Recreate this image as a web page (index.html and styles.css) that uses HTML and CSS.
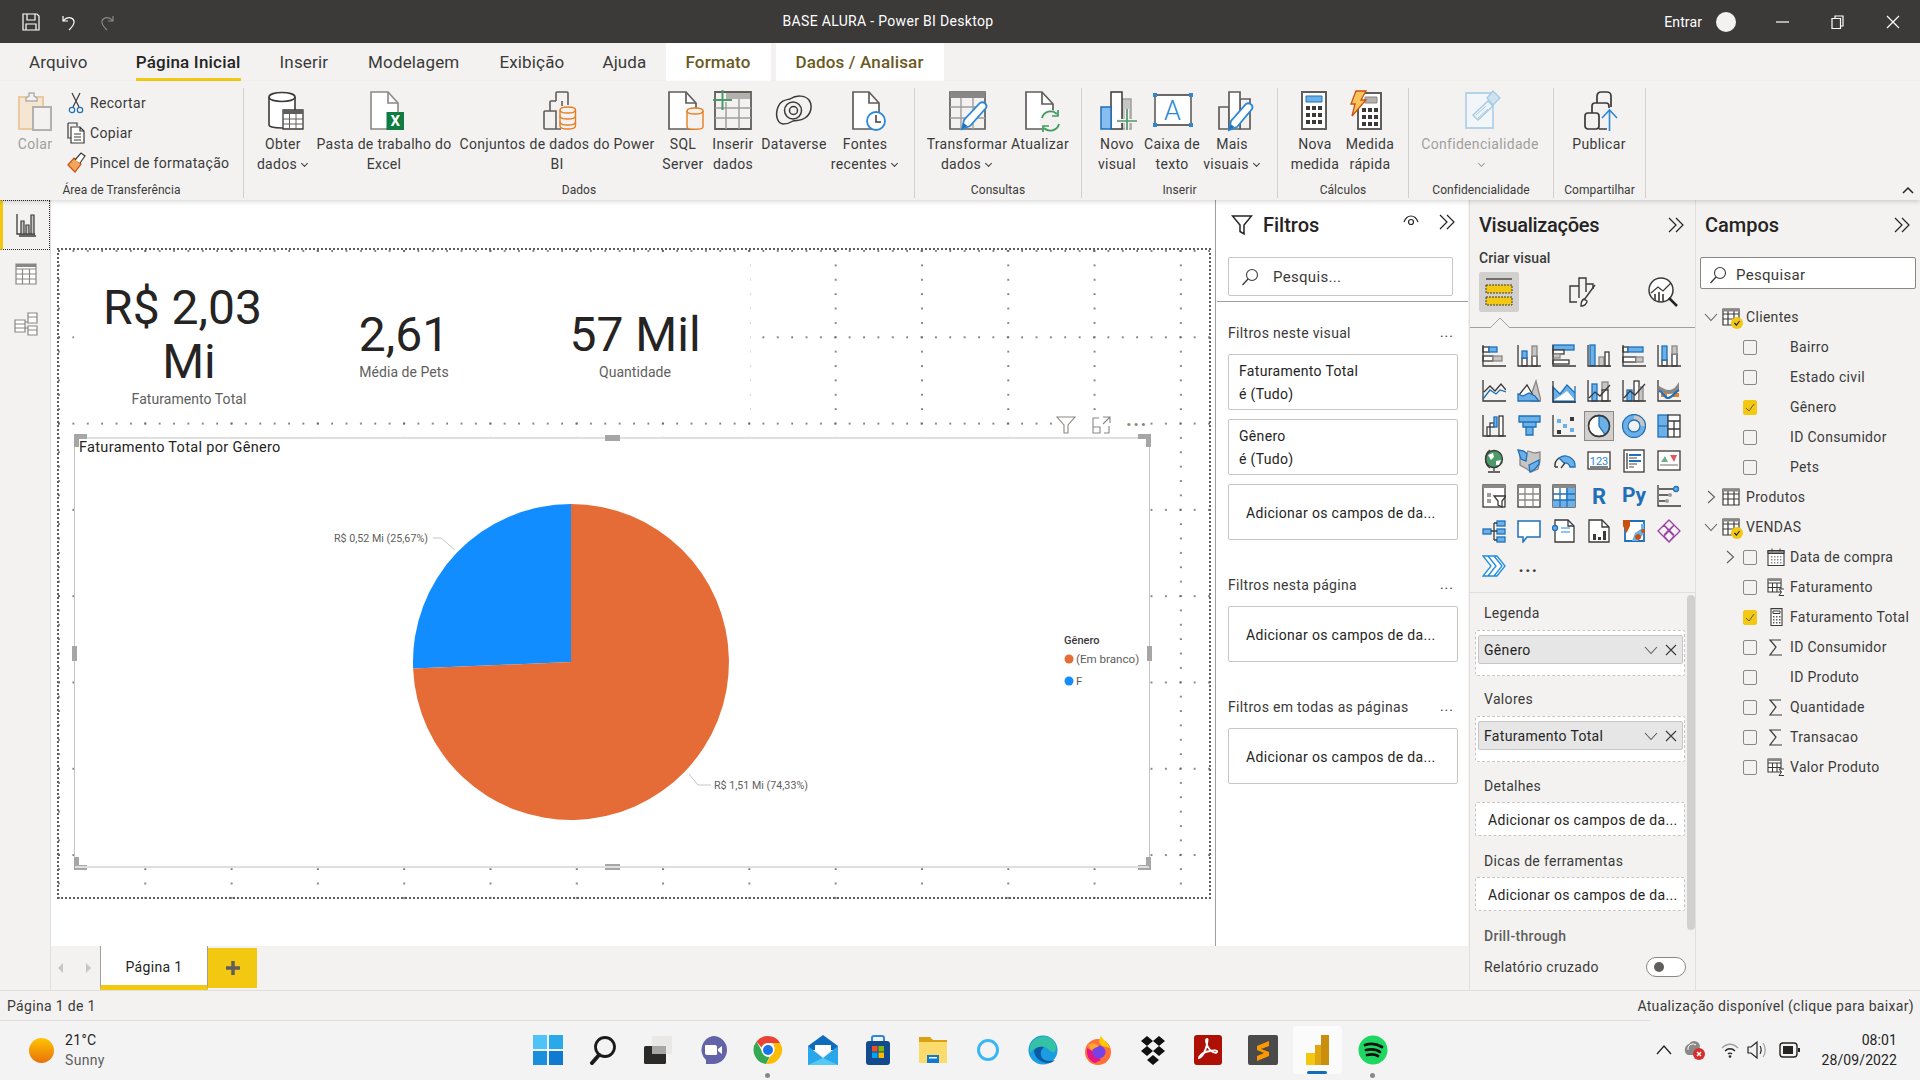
FILE: index.html
```html
<!DOCTYPE html>
<html lang="pt-BR">
<head>
<meta charset="utf-8">
<title>BASE ALURA - Power BI Desktop</title>
<link rel="stylesheet" href="styles.css">
</head>
<body>
<svg class="sprite" aria-hidden="true">
  <symbol id="tbl" viewBox="0 0 18 18"><path d="M1 1h16v16H1zM1 6h16M1 11h16M6 2v15M12 2v15" fill="#fff" stroke="#3b3a39" stroke-width="1.2"/><path d="M1 1h16v2.5H1z" fill="#8a8886"/></symbol>
  <symbol id="chk" viewBox="0 0 12 12"><circle cx="6" cy="6" r="6" fill="#f2c811"/><path d="M3.4 6l2 2 3.2-4" fill="none" stroke="#252423" stroke-width="1.2"/></symbol>
  <symbol id="sig" viewBox="0 0 18 18"><path d="M14 2H3l6 7-6 8h12" fill="none" stroke="#3b3a39" stroke-width="1.2"/></symbol>
  <symbol id="tsig" viewBox="0 0 18 18"><path d="M1 1h13v13H1zM1 5h13M1 9.500h13M5.500 5v9M10 5v9" fill="#fff" stroke="#3b3a39" stroke-width="1.100"/><path d="M1 1h13v2H1z" fill="#8a8886"/><path d="M17 11h-5l2.600 3-2.600 3.500h5" fill="#fff" stroke="#3b3a39"/></symbol>
  <symbol id="calc" viewBox="0 0 18 18"><path d="M4 .6h11v17H4z" fill="#fff" stroke="#3b3a39" stroke-width="1.100"/><path d="M6 3h7v2.500H6z" fill="none" stroke="#3b3a39"/><path d="M6 8h1.500v1.500H6zM9 8h1.500v1.500H9zM12 8h1.500v1.500H12zM6 11h1.500v1.500H6zM9 11h1.500v1.500H9zM12 11h1.500v1.500H12zM6 14h1.500v1.500H6zM9 14h1.500v1.500H9zM12 14h1.500v1.500H12z" fill="#605e5c"/></symbol>
  <symbol id="cal" viewBox="0 0 18 18"><path d="M1 2.500h16v15H1z" fill="#fff" stroke="#3b3a39" stroke-width="1.100"/><path d="M1 2.500h16v3H1zM5 .5v3M13 .5v3" fill="#8a8886" stroke="#3b3a39"/><path d="M4 8h1.400v1.400H4zM7 8h1.400v1.400H7zM10 8h1.400v1.400H10zM13 8h1.400v1.400H13zM4 11h1.400v1.400H4zM7 11h1.400v1.400H7zM10 11h1.400v1.400H10zM13 11h1.400v1.400H13zM4 14h1.400v1.400H4zM7 14h1.400v1.400H7zM10 14h1.400v1.400H10zM13 14h1.400v1.400H13z" fill="#8a8886"/></symbol>
  <symbol id="dbl" viewBox="0 0 18 18"><path d="M2 2l7 7-7 7M9 2l7 7-7 7" fill="none" stroke="#252423" stroke-width="1.200"/></symbol>
  <symbol id="mag" viewBox="0 0 18 18"><circle cx="11" cy="7" r="5.500" fill="none" stroke="#3b3a39" stroke-width="1.100"/><path d="M7 11l-5.500 6" fill="none" stroke="#3b3a39" stroke-width="1.300"/></symbol>
  <symbol id="cv" viewBox="0 0 14 14"><path d="M1 4l6 6.500L13 4" fill="none" stroke="#605e5c" stroke-width="1.100"/></symbol>
  <symbol id="cr" viewBox="0 0 14 14"><path d="M4 1l6.500 6L4 13" fill="none" stroke="#605e5c" stroke-width="1.100"/></symbol>
  <symbol id="xx" viewBox="0 0 14 14"><path d="M2 2l10 10M12 2L2 12" fill="none" stroke="#3b3a39" stroke-width="1.100"/></symbol>
</svg>
<div class="app">
  <header class="titlebar">
    <div class="qa">
      <svg width="20" height="20" viewBox="0 0 20 20"><path d="M2 2h14l2 2v14H2zM6 2v6h8V2M5 18v-6h10v6" fill="none" stroke="#fff" stroke-width="1.200"/></svg>
      <svg width="20" height="20" viewBox="0 0 20 20"><path d="M4 4v5h5M4.500 8.500C8 4 14 5 15 9c.8 3.500-2 6-5 9" fill="none" stroke="#fff" stroke-width="1.200"/></svg>
      <svg width="20" height="20" viewBox="0 0 20 20"><path d="M16 4v5h-5M15.500 8.500C12 4 6 5 5 9c-.8 3.500 2 6 5 9" fill="none" stroke="#8a8886" stroke-width="1.200"/></svg>
    </div>
    <div class="doc-title">BASE ALURA - Power BI Desktop</div>
    <div class="win">
      <span class="enter">Entrar</span><span class="avatar"></span>
      <svg class="wbtn" width="55" height="14" viewBox="0 0 55 14"><path d="M21 7h13" stroke="#fff" stroke-width="1.200"/></svg>
      <svg class="wbtn" width="55" height="14" viewBox="0 0 55 14"><path d="M22 3.500h8.500v10H22zM25 3.500V1h8v10h-2.500" fill="none" stroke="#fff" stroke-width="1.200"/></svg>
      <svg class="wbtn" width="55" height="14" viewBox="0 0 55 14"><path d="M22 1l12 12M34 1L22 13" fill="none" stroke="#fff" stroke-width="1.200"/></svg>
    </div>
  </header>

  <nav class="tabs">
    <span class="tab tab-first">Arquivo</span>
    <span class="tab tab-on">Página Inicial</span>
    <span class="tab">Inserir</span>
    <span class="tab">Modelagem</span>
    <span class="tab">Exibição</span>
    <span class="tab tab-aj">Ajuda</span>
    <span class="tab tab-ctx">Formato</span>
    <span class="tab tab-ctx tab-ctx2">Dados / Analisar</span>
  </nav>

  <section class="ribbon">
    <div class="group g-clip">
      <div class="group-body">
        <div class="rb w42 off">
          <svg class="ri" viewBox="0 0 40 40"><path d="M4 6h24v32H4z" fill="#f5e6d3" stroke="#e8c9a0" stroke-width="2"/><path d="M11 7l3-2V2h5v3l3 2v3H11z" fill="#f3f2f1" stroke="#b3b0ad" stroke-width="1.500"/><path d="M18 16h18v23H18z" fill="#f3f2f1" stroke="#b3b0ad" stroke-width="2"/></svg>
          <span>Colar</span>
        </div>
        <div class="small-list">
          <div class="sb"><svg width="18" height="22" viewBox="0 0 18 22"><path d="M5 1l7 14M13 1L6 15" fill="none" stroke="#3b3a39" stroke-width="1.200"/><circle cx="5" cy="18" r="2.700" fill="none" stroke="#1f70b8" stroke-width="1.200"/><circle cx="13" cy="18" r="2.700" fill="none" stroke="#1f70b8" stroke-width="1.200"/></svg><span>Recortar</span></div>
          <div class="sb"><svg width="18" height="22" viewBox="0 0 18 22"><path d="M1 1h9v3M1 1v15h3" fill="none" stroke="#3b3a39" stroke-width="1.200"/><path d="M4 5h9l4 4v12H4zM13 5v4h4M7 12h7M7 15h7M7 18h7" fill="#fff" stroke="#3b3a39" stroke-width="1.200"/></svg><span>Copiar</span></div>
          <div class="sb"><svg width="20" height="22" viewBox="0 0 20 22"><path d="M2 13l6-7 7 6-6 8z" fill="#f2a65a" stroke="#ca5010" stroke-width="1.200"/><path d="M9 8l6-7 4 3-5 7" fill="#fff" stroke="#3b3a39" stroke-width="1.200"/></svg><span>Pincel de formatação</span></div>
        </div>
      </div>
      <div class="group-name">Área de Transferência</div>
    </div>

    <div class="group g-data">
      <div class="group-body">
        <div class="rb w58">
          <svg class="ri" viewBox="0 0 40 40"><path d="M6 6c0-6 26-6 26 0v28c0 4-26 4-26 0z" fill="#fff" stroke="#3b3a39" stroke-width="1.600"/><path d="M6 6c0 6 26 6 26 0" fill="none" stroke="#3b3a39" stroke-width="1.600"/><path d="M20 19h20v19H20z" fill="#fff" stroke="#3b3a39" stroke-width="1.300"/><path d="M20 19h20v4H20z" fill="#605e5c"/><path d="M20 28h20M20 33h20M26.500 23v15M33 23v15" stroke="#605e5c"/></svg>
          <span>Obter<br>dados<i class="car"></i></span>
        </div>
        <div class="rb w144">
          <svg class="ri" viewBox="0 0 40 40"><path d="M7 1h17l10 11v26H7z" fill="#fff" stroke="#8a8886" stroke-width="1.600"/><path d="M24 1v11h10" fill="none" stroke="#8a8886" stroke-width="1.600"/><path d="M22.500 21H40v18H22.500z" fill="#107c41"/><text x="31.200" y="35" class="xl">X</text></svg>
          <span>Pasta de trabalho do<br>Excel</span>
        </div>
        <div class="rb w202">
          <svg class="ri" viewBox="0 0 40 40"><path d="M7 21a1 1 0 0 1 1-1h11v18H8a1 1 0 0 1-1-1zM13 20v-9a1 1 0 0 1 1-1h5M19 10V2a1 1 0 0 1 1-1h10a1 1 0 0 1 1 1v12M25 10v5M19 38h5" fill="none" stroke="#605e5c" stroke-width="1.600"/><path d="M23 19c0-4 15.500-4 15.500 0v16c0 4-15.500 4-15.500 0z" fill="#f3f2f1" stroke="#ea7d1f" stroke-width="1.400"/><path d="M23 19c0 4 15.500 4 15.500 0M23 25c0 4 15.500 4 15.500 0M23 31c0 4 15.500 4 15.500 0" fill="none" stroke="#ea7d1f" stroke-width="1.400"/></svg>
          <span>Conjuntos de dados do Power<br>BI</span>
        </div>
        <div class="rb w50">
          <svg class="ri" viewBox="0 0 40 40"><path d="M6 1h17l10 11v26H6z" fill="#fff" stroke="#605e5c" stroke-width="1.700"/><path d="M23 1v11h10" fill="none" stroke="#605e5c" stroke-width="1.700"/><path d="M24 20c0-4 16-4 16 0v16c0 3-16 3-16 0z" fill="#f3f2f1" stroke="#ea7d1f" stroke-width="1.400"/><path d="M24 20c0 4 16 4 16 0" fill="none" stroke="#ea7d1f" stroke-width="1.400"/></svg>
          <span>SQL<br>Server</span>
        </div>
        <div class="rb w50">
          <svg class="ri" viewBox="0 0 40 40"><path d="M2 1h36v37H2z" fill="#f3f2f1" stroke="#605e5c" stroke-width="1.800"/><path d="M2 17h36M2 27h36M13 11v27M26 8v30" stroke="#a19f9d" stroke-width="1.500"/><path d="M13 2h24v6H13z" fill="#b3b0ad"/><path d="M9.500-1v20M0 9h19" stroke="#4c9a6a" stroke-width="2"/></svg>
          <span>Inserir<br>dados</span>
        </div>
        <div class="rb w72">
          <svg class="ri" viewBox="0 0 40 40"><path d="M9 33C3 32 1 24 4 16 7 9 12 9 16 8c6-4 15-4 19 1 4 6 2 14-4 18-4 3-8 2-12 3-3 2-6 3-10 3z" fill="none" stroke="#3b3a39" stroke-width="1.500"/><circle cx="19" cy="19.500" r="8.500" fill="none" stroke="#3b3a39" stroke-width="1.500"/><circle cx="19.500" cy="19.500" r="4" fill="none" stroke="#3b3a39" stroke-width="1.500"/></svg>
          <span>Dataverse</span>
        </div>
        <div class="rb w70">
          <svg class="ri" viewBox="0 0 40 40"><path d="M8 1h16l10 11v26H8z" fill="#fff" stroke="#605e5c" stroke-width="1.700"/><path d="M24 1v11h10" fill="none" stroke="#605e5c" stroke-width="1.700"/><circle cx="31" cy="30" r="9" fill="#fff" stroke="#2b88d8" stroke-width="1.800"/><path d="M31 24v7h5" fill="none" stroke="#3b3a39" stroke-width="1.500"/></svg>
          <span>Fontes<br>recentes<i class="car"></i></span>
        </div>
      </div>
      <div class="group-name">Dados</div>
    </div>

    <div class="group g-query">
      <div class="group-body">
        <div class="rb w84">
          <svg class="ri" viewBox="0 0 40 40"><path d="M3 1h35v37H3z" fill="#f3f2f1" stroke="#605e5c" stroke-width="1.700"/><path d="M3 16h35M3 27h35M14 7v31M26 7v31" stroke="#a19f9d" stroke-width="1.400"/><path d="M3 1h35v6H3z" fill="#8a8886"/><path d="M15 38l2-9 16-17c3-2 8 1 6 5L23 35z" fill="#fff" stroke="#2b88d8" stroke-width="1.800"/><path d="M15 38l1.500-6 4 3z" fill="#1f70b8"/></svg>
          <span>Transformar<br>dados<i class="car"></i></span>
        </div>
        <div class="rb w62">
          <svg class="ri" viewBox="0 0 40 40"><path d="M6 1h16l11 12v25H6z" fill="#fff" stroke="#605e5c" stroke-width="1.700"/><path d="M22 1v12h11" fill="none" stroke="#605e5c" stroke-width="1.700"/><circle cx="30.500" cy="30" r="11" fill="#f3f2f1"/><path d="M22 27a9 9 0 0 1 15-4M39 33a9 9 0 0 1-15 4" fill="none" stroke="#3f9c5f" stroke-width="1.900"/><path d="M38 19v6h-6M23 41v-6h6" fill="none" stroke="#3f9c5f" stroke-width="1.700"/></svg>
          <span>Atualizar</span>
        </div>
      </div>
      <div class="group-name">Consultas</div>
    </div>

    <div class="group g-insert">
      <div class="group-body">
        <div class="rb w50">
          <svg class="ri" viewBox="0 0 40 40"><path d="M25 8h9v30h-9z" fill="#c8c6c4" stroke="#a19f9d" stroke-width="1.500"/><path d="M14 1h11v37H14z" fill="#fff" stroke="#3b3a39" stroke-width="1.500"/><path d="M4 16h10v22H4z" fill="#87bdf0" stroke="#1f70b8" stroke-width="1.500"/><path d="M30 18v21M20 30h20" stroke="#f3f2f1" stroke-width="4"/><path d="M30 18v21M20 30h20" stroke="#4c9a6a" stroke-width="1.700"/></svg>
          <span>Novo<br>visual</span>
        </div>
        <div class="rb w60">
          <svg class="ri" viewBox="0 0 40 40"><path d="M3 4h36v30H3z" fill="#fff" stroke="#3b3a39" stroke-width="1.300"/><path d="M1 2h4v4H1zM37 2h4v4h-4zM1 32h4v4H1zM37 32h4v4h-4z" fill="#2b88d8"/><text x="20.500" y="28.500" class="aa">A</text></svg>
          <span>Caixa de<br>texto</span>
        </div>
        <div class="rb w60">
          <svg class="ri" viewBox="0 0 40 40"><path d="M28 8h10v30H28zM7 16h10v22H7z" fill="#f3f2f1" stroke="#605e5c" stroke-width="1.700"/><path d="M17 1h11v37H17z" fill="#fff" stroke="#605e5c" stroke-width="1.700"/><path d="M17 39l2-9 15-17c3-2 8 1 6 5L25 36z" fill="#fff" stroke="#2b88d8" stroke-width="1.800"/><path d="M17 39l1.500-6 4 3z" fill="#1f70b8"/></svg>
          <span>Mais<br>visuais<i class="car"></i></span>
        </div>
      </div>
      <div class="group-name">Inserir</div>
    </div>

    <div class="group g-calc">
      <div class="group-body">
        <div class="rb w54">
          <svg class="ri" viewBox="0 0 40 40"><path d="M7 1h24v37H7z" fill="#fff" stroke="#605e5c" stroke-width="2"/><path d="M11 5h16v6H11z" fill="#6cb0e8" stroke="#1f70b8"/><path d="M11 15h4v4h-4zM17 15h4v4h-4zM23 15h4v4h-4zM11 22h4v4h-4zM17 22h4v4h-4zM23 22h4v4h-4zM11 29h4v4h-4zM17 29h4v4h-4zM23 29h4v4h-4z" fill="#3b3a39"/></svg>
          <span>Nova<br>medida</span>
        </div>
        <div class="rb w56">
          <svg class="ri" viewBox="0 0 40 40"><path d="M8 2h23v36H8z" fill="#fff" stroke="#605e5c" stroke-width="2"/><path d="M15 6h12v6H15z" fill="#b3b0ad" stroke="#8a8886"/><path d="M12 17h4v4h-4zM18 17h4v4h-4zM24 17h4v4h-4zM12 24h4v4h-4zM18 24h4v4h-4zM24 24h4v4h-4zM12 31h4v4h-4zM18 31h4v4h-4zM24 31h4v4h-4z" fill="#3b3a39"/><path d="M6 0h10l-5 9h5L2 25l3-12H1z" fill="#f8c55c" stroke="#ca5010" stroke-width="1.300"/></svg>
          <span>Medida<br>rápida</span>
        </div>
      </div>
      <div class="group-name">Cálculos</div>
    </div>

    <div class="group g-conf">
      <div class="group-body">
        <div class="rb w122 off">
          <svg class="ri" viewBox="0 0 40 40"><path d="M6 2h27v35H6z" fill="#f3f6f9" stroke="#b4d2e8" stroke-width="1.800"/><path d="M13 24l15-14 5 5-15 14z" fill="#eef4fa" stroke="#a8cbe4" stroke-width="1.500"/><path d="M16 24l10-9M18 27l10-9" stroke="#a8cbe4"/><path d="M27 7l6-7 7 7-7 7z" fill="#cfe2f1" stroke="#a8cbe4" stroke-width="1.300"/></svg>
          <span>Confidencialidade<br><i class="car car-off"></i></span>
        </div>
      </div>
      <div class="group-name">Confidencialidade</div>
    </div>

    <div class="group g-share">
      <div class="group-body">
        <div class="rb w70">
          <svg class="ri" viewBox="0 0 40 40"><path d="M6 25a3 3 0 0 1 3-3h8a3 3 0 0 1 3 3v10a3 3 0 0 1-3 3H9a3 3 0 0 1-3-3zM13 22v-7a3 3 0 0 1 3-3h11a3 3 0 0 1 3 3v2M18 12V5a4 4 0 0 1 4-4h6a4 4 0 0 1 4 4v11M20 38h8" fill="none" stroke="#3b3a39" stroke-width="1.700"/><path d="M30.500 40V19M23 27l7.500-8 7.500 8" fill="none" stroke="#2b88d8" stroke-width="1.600"/></svg>
          <span>Publicar</span>
        </div>
      </div>
      <div class="group-name">Compartilhar</div>
    </div>
    <svg class="collapse" width="12" height="8" viewBox="0 0 12 8"><path d="M1 7l5-5 5 5" fill="none" stroke="#252423" stroke-width="1.500"/></svg>
  </section>

  <main class="main">
    <aside class="rail">
      <div class="rail-item rail-on"><svg width="22" height="24" viewBox="0 0 22 24"><path d="M2 1v20h18M4 23h17" fill="none" stroke="#3b3a39" stroke-width="1.300"/><path d="M6 8h3v13H6zM11 12h3v9h-3zM16 2h3v19h-3z" fill="#c8c6c4" stroke="#3b3a39" stroke-width="1.200"/></svg></div>
      <div class="rail-item"><svg width="22" height="22" viewBox="0 0 22 22"><path d="M1 1h20v20H1zM1 6h20M1 11h20M1 16h20M7.500 6v15M14.500 6v15" fill="#fff" stroke="#8a8886" stroke-width="1.200"/><path d="M1 1h20v3H1z" fill="#8a8886"/></svg></div>
      <div class="rail-item"><svg width="24" height="24" viewBox="0 0 24 24"><path d="M1 8h10v12H1zM1 12h10M1 16h10M14 1h9v10h-9zM14 5h9M14 14h9v9h-9zM14 18h9M11 10h3M11 16h3" fill="#fff" stroke="#8a8886" stroke-width="1.200"/></svg></div>
    </aside>

    <div class="center">
      <div class="workspace">
        <div class="canvas">
          <div class="page">
            <div class="cards">
              <div class="card c1"><div class="big"><span class="shift">R$ 2,03</span><br>Mi</div><div class="cap">Faturamento Total</div></div>
              <div class="card c2"><div class="big">2,61</div><div class="cap">Média de Pets</div></div>
              <div class="card c3"><div class="big">57 Mil</div><div class="cap">Quantidade</div></div>
            </div>
            <div class="vis-tools">
              <svg width="20" height="18" viewBox="0 0 20 18"><path d="M1 1h18l-7 8v8h-4V9z" fill="none" stroke="#8a8886" stroke-width="1.100"/></svg>
              <svg width="20" height="18" viewBox="0 0 20 18"><path d="M8 2H2v15h7v-6H2M18 10v7h-5M12 1h7v6M19 1l-7 7" fill="none" stroke="#8a8886" stroke-width="1.100"/></svg>
              <span class="dots">...</span>
            </div>
            <div class="chart">
              <div class="chart-title">Faturamento Total por Gênero</div>
              <svg class="chart-svg" width="1076" height="431" viewBox="0 0 1076 431">
                <path d="M497 225V67A158 158 0 0 0 339.100 231.600Z" fill="#118dff"/>
                <path d="M497 225L339.100 231.600A158 158 0 1 0 497 67Z" fill="#e66c37"/>
                <path d="M359 101h8l14 12M615 337l9 11h13" fill="none" stroke="#c8c6c4"/>
                <text x="260" y="105" class="lbl">R$ 0,52 Mi (25,67%)</text>
                <text x="640" y="352" class="lbl">R$ 1,51 Mi (74,33%)</text>
                <text x="990" y="207" class="leg-t">Gênero</text>
                <circle cx="995" cy="222" r="4.500" fill="#e66c37"/>
                <text x="1002" y="226" class="leg">(Em branco)</text>
                <circle cx="995" cy="244" r="4.500" fill="#118dff"/>
                <text x="1002" y="248" class="leg">F</text>
              </svg>
              <i class="hd hd-tl"></i><i class="hd hd-tm"></i><i class="hd hd-tr"></i><i class="hd hd-ml"></i><i class="hd hd-mr"></i><i class="hd hd-bl"></i><i class="hd hd-bm"></i><i class="hd hd-br"></i>
            </div>
          </div>
        </div>

        <aside class="filters">
          <div class="pane-head">
            <svg width="22" height="22" viewBox="0 0 22 22"><path d="M1.500 2h19l-7.500 9v9l-4-2.500V11z" fill="none" stroke="#252423" stroke-width="1.500"/></svg>
            <span class="pane-title">Filtros</span>
            <svg class="eye" width="16" height="14" viewBox="0 0 16 14"><path d="M1 8c3-8 11-8 14 0" fill="none" stroke="#252423" stroke-width="1.200"/><circle cx="8" cy="8" r="2.500" fill="none" stroke="#252423" stroke-width="1.200"/></svg>
            <svg class="dblb" width="18" height="18"><use href="#dbl"/></svg>
          </div>
          <div class="fsearch"><svg width="18" height="18"><use href="#mag"/></svg><span>Pesquis...</span></div>
          <div class="fdiv"></div>
          <div class="fsec"><span>Filtros neste visual</span><b>...</b></div>
          <div class="fcard fcard-first">Faturamento Total<br>é (Tudo)</div>
          <div class="fcard">Gênero<br>é (Tudo)</div>
          <div class="fcard fadd">Adicionar os campos de da...</div>
          <div class="fsec fsec-gap"><span>Filtros nesta página</span><b>...</b></div>
          <div class="fcard fcard-first fadd">Adicionar os campos de da...</div>
          <div class="fsec fsec-gap"><span>Filtros em todas as páginas</span><b>...</b></div>
          <div class="fcard fcard-first fadd">Adicionar os campos de da...</div>
        </aside>
      </div>
      <div class="pagebar">
        <svg class="pnav" width="10" height="12" viewBox="0 0 10 12"><path d="M7 1L2 6l5 5z" fill="#c8c6c4"/></svg>
        <svg class="pnav pnav2" width="10" height="12" viewBox="0 0 10 12"><path d="M3 1l5 5-5 5z" fill="#c8c6c4"/></svg>
        <div class="ptab">Página 1</div>
        <div class="padd"><svg width="16" height="16" viewBox="0 0 16 16"><path d="M8 1v14M1 8h14" stroke="#605e5c" stroke-width="3.500"/></svg></div>
      </div>
    </div>

    <aside class="viz">
      <div class="viz-head"><span class="pane-title pt-viz">Visualizações</span><svg width="18" height="18"><use href="#dbl"/></svg></div>
      <div class="criar">Criar visual</div>
      <div class="viz-tabs">
        <div class="vt vt-on"><svg width="34" height="32" viewBox="0 0 34 32"><path d="M4 3h26" stroke="#3b3a39" stroke-width="1.300"/><path d="M4 9h26v8H4zM4 21h26v8H4z" fill="#f2c811" stroke="#3b3a39" stroke-dasharray="2 1"/></svg></div>
        <div class="vt vt-fmt"><svg width="32" height="32" viewBox="0 0 32 32"><path d="M12 22V2h7v14M12 10H3v16h7M19 8h7v5" fill="none" stroke="#3b3a39" stroke-width="1.400"/><path d="M28 9L17 24M14 30c0-4 1-6 3-7l3 2c0 3-3 5-6 5z" fill="#fff" stroke="#3b3a39" stroke-width="1.400"/></svg></div>
        <div class="vt"><svg width="32" height="32" viewBox="0 0 32 32"><circle cx="14" cy="14" r="12" fill="#fff" stroke="#3b3a39" stroke-width="1.500"/><path d="M4 17l7-6 5 4 8-8" fill="none" stroke="#3b3a39" stroke-width="1.300"/><path d="M8 18v6M12 16v9M16 18v7" stroke="#605e5c" stroke-width="2"/><path d="M22 22l8 8" stroke="#252423" stroke-width="2.500"/></svg></div>
      </div>
      <div class="viz-sep"><svg class="notch" width="20" height="11" viewBox="0 0 20 11"><path d="M0 11L10 1l10 10" fill="#f3f2f1" stroke="#a19f9d"/></svg></div>

      <div class="vgrid">
        <svg class="vi" viewBox="0 0 24 24"><rect class="w" x="1" y="3" width="6" height="5"/><rect class="b" x="7" y="3" width="8" height="5"/><rect class="w" x="1" y="12" width="10" height="5"/><rect class="g" x="11" y="12" width="9" height="5"/><path class="d" d="M1 1v21h23"/></svg>
        <svg class="vi" viewBox="0 0 24 24"><rect class="w" x="5" y="14" width="5" height="8"/><rect class="b" x="5" y="7" width="5" height="7"/><rect class="w" x="15" y="12" width="5" height="10"/><rect class="g" x="15" y="2" width="5" height="10"/><path class="d" d="M1 1v21h23"/></svg>
        <svg class="vi" viewBox="0 0 24 24"><rect class="b" x="1" y="1" width="21" height="5"/><rect class="w" x="1" y="6" width="11" height="4"/><rect class="g" x="1" y="10" width="7" height="4"/><rect class="w" x="1" y="16" width="16" height="4"/><path class="d" d="M1 1v21h23"/></svg>
        <svg class="vi" viewBox="0 0 24 24"><rect class="b" x="3" y="1" width="5" height="21"/><rect class="g" x="12" y="13" width="5" height="9"/><rect class="w" x="18" y="8" width="4" height="14"/><path class="d" d="M1 1v21h23"/></svg>
        <svg class="vi" viewBox="0 0 24 24"><rect class="w" x="1" y="3" width="5" height="5"/><rect class="b" x="6" y="3" width="15" height="5"/><rect class="w" x="1" y="13" width="13" height="5"/><rect class="g" x="14" y="13" width="7" height="5"/><path class="d" d="M1 1v21h23"/></svg>
        <svg class="vi" viewBox="0 0 24 24"><rect class="w" x="5" y="16" width="5" height="6"/><rect class="b" x="5" y="2" width="5" height="14"/><rect class="w" x="15" y="10" width="5" height="12"/><rect class="g" x="15" y="2" width="5" height="8"/><path class="d" d="M1 1v21h23"/></svg>

        <svg class="vi" viewBox="0 0 24 24"><path class="d" d="M1 1v21h23M2 13l6-6 5 5 6-7 5 6"/><path class="bl" d="M1 20l7-9 6 4 4-4 6 2"/></svg>
        <svg class="vi" viewBox="0 0 24 24"><path class="g" d="M14 16L19 2l5 20H14z"/><path class="w" d="M2 16l8-10 7 12H2z"/><path class="b" d="M1 22v-7l5 2 6-3 6 3 4 5z"/></svg>
        <svg class="vi" viewBox="0 0 24 24"><path class="b" d="M1 8l7 7 7-9 8 8v-7 16H1z"/><path fill="#fff" stroke="none" d="M2 21l6-4 7-5 7 8v1z"/><path class="d" d="M1 2v21h23"/></svg>
        <svg class="vi" viewBox="0 0 24 24"><rect class="b" x="5" y="5" width="5" height="17"/><rect class="g" x="15" y="3" width="6" height="8"/><rect class="w" x="15" y="11" width="6" height="11"/><path class="d" d="M1 1v21h23M2 19l6-6 5 4 10-11"/></svg>
        <svg class="vi" viewBox="0 0 24 24"><rect class="b" x="5" y="11" width="5" height="11"/><rect class="w" x="12" y="2" width="5" height="20"/><rect class="g" x="17" y="8" width="4" height="14"/><path class="d" d="M1 1v21h23M2 19l6-7 5 4 10-11"/></svg>
        <svg class="vi" viewBox="0 0 24 24"><path fill="#8a8886" d="M2 7c4 2 6 4 10 4s7-3 10-8v8c-3 3-6 4-10 4S5 13 2 11z"/><path fill="#ea7d1f" d="M4 14h6v4H4zM16 14h6v4h-6z"/><path fill="none" stroke="#1f70b8" stroke-width="2.200" d="M2 12c4 0 5 7 9 7s7-6 11-8"/><path class="d" d="M1 1v21h23"/></svg>

        <svg class="vi" viewBox="0 0 24 24"><rect class="w" x="5" y="13" width="3" height="9"/><rect class="w" x="8" y="9" width="4" height="4"/><rect class="b" x="12" y="3" width="3" height="10"/><rect class="w" x="17" y="2" width="4" height="20"/><path class="d" d="M1 1v21h23"/></svg>
        <svg class="vi" viewBox="0 0 24 24"><path class="b" d="M2 2h21v6H2zM6 8h13v5H6zM9 13h7v8H9z"/></svg>
        <svg class="vi" viewBox="0 0 24 24"><path class="d" d="M1 1v21h23"/><rect fill="#6cb0e8" x="5" y="5" width="4" height="4"/><rect fill="#3b3a39" x="18" y="3" width="4" height="4"/><rect fill="#6cb0e8" x="11" y="10" width="4" height="4"/><rect fill="#3b3a39" x="5" y="16" width="4" height="4"/><rect fill="#6cb0e8" x="18" y="14" width="4" height="4"/></svg>
        <div class="vi-on"><svg class="vi" viewBox="0 0 24 24"><circle class="w" cx="12" cy="12" r="10.500"/><path class="b" d="M12 12V1.500a10.500 10.500 0 0 1 6 19z"/><circle cx="12" cy="12" r="10.500" fill="none" stroke="#3b3a39"/></svg></div>
        <svg class="vi" viewBox="0 0 24 24"><circle cx="12" cy="12" r="9" fill="none" stroke="#6cb0e8" stroke-width="5"/><path d="M12 3a9 9 0 0 1 9 9" fill="none" stroke="#c8c6c4" stroke-width="5"/><circle cx="12" cy="12" r="11.500" fill="none" stroke="#1f70b8"/><circle cx="12" cy="12" r="6" fill="none" stroke="#1f70b8"/></svg>
        <svg class="vi" viewBox="0 0 24 24"><rect class="b" x="1" y="1" width="10" height="22"/><path class="b" d="M1 12h10"/><rect class="w" x="11" y="1" width="12" height="22"/><path class="d" d="M11 7h12M17 7v16M11 15h12"/></svg>

        <svg class="vi" viewBox="0 0 24 24"><circle cx="12" cy="10" r="8.500" fill="#4c9a6a" stroke="#3b3a39"/><path fill="#fff" d="M6 6l5-2 1 4-3 3zM14 12l5-1-2 5-3 0z"/><path class="d" d="M8 1C2 5 2 15 8 19M12 19v3M6 23h12"/></svg>
        <svg class="vi" viewBox="0 0 24 24"><path class="g" d="M11 2l7 2 5-1v9l-2 8-7 3-4-3-7-4V7l5 1z"/><path class="b" d="M1 1l6 1 3 3-1 7-5-2z"/><path class="b" d="M12 16l10-5v4l-4 5-5 3z"/></svg>
        <svg class="vi" viewBox="0 0 24 24"><path fill="none" stroke="#3b3a39" stroke-width="1.500" d="M3 18a9.500 9.500 0 0 1 4-9"/><path class="b" d="M7 9a10 10 0 0 1 16 9h-5a5 5 0 0 0-6-4z"/><path class="d" d="M9 19l4-5M3 18h3"/></svg>
        <svg class="vi" viewBox="0 0 24 24"><rect class="w" x="1" y="3" width="22" height="17"/><text class="vt123" x="12" y="16">123</text><path class="d" d="M3 18h18"/></svg>
        <svg class="vi" viewBox="0 0 24 24"><rect class="w" x="2" y="1" width="20" height="22"/><path d="M5 4v16" stroke="#3b3a39"/><path d="M7 6h12M7 12h12" stroke="#1f70b8" stroke-width="2"/><path d="M7 9h8M7 15h8M7 18h5" stroke="#8a8886" stroke-width="1.500"/></svg>
        <svg class="vi" viewBox="0 0 24 24"><rect class="w" x="1" y="2" width="22" height="19"/><path d="M4 13l4-6 3 6z" fill="#6ab187"/><path d="M13 6h7l-3 7z" fill="#e05a5a"/><path d="M3 16h18" stroke="#a19f9d" stroke-width="1.500"/></svg>

        <svg class="vi" viewBox="0 0 24 24"><rect class="w" x="1" y="1" width="22" height="22"/><path fill="#8a8886" d="M1 1h22v3H1z"/><path fill="#a19f9d" d="M5 9h4v4H5zM5 15h4v4H5z"/><path class="w" d="M12 12h12l-4 5v6l-4-2v-4z"/></svg>
        <svg class="vi" viewBox="0 0 24 24"><rect class="w" x="1" y="1" width="22" height="22"/><path fill="#8a8886" d="M1 1h22v3H1z"/><path stroke="#8a8886" d="M1 10h22M1 16h22M8 4v19M16 4v19"/></svg>
        <svg class="vi" viewBox="0 0 24 24"><rect class="w" x="1" y="1" width="22" height="22"/><path fill="#8a8886" d="M1 1h22v3H1z"/><path fill="#6cb0e8" d="M1 16h22v7H1zM14 4h9v12h-9z"/><path stroke="#1f70b8" d="M1 10h22M1 16h22M8 4v19M15 4v19"/></svg>
        <svg class="vi" viewBox="0 0 24 24"><text class="vr" x="12" y="20">R</text></svg>
        <svg class="vi" viewBox="0 0 24 24"><text class="vp" x="12" y="18">Py</text></svg>
        <svg class="vi" viewBox="0 0 24 24"><path class="d" d="M1 1v21h23M2 5h14M2 11h10M2 17h7"/><circle cx="19" cy="5" r="2.500" fill="#6cb0e8" stroke="#1f70b8"/><circle cx="13" cy="11" r="2" fill="#a19f9d"/><circle cx="10" cy="17" r="2" fill="#a19f9d"/></svg>

        <svg class="vi" viewBox="0 0 24 24"><rect class="b" x="1" y="10" width="8" height="5"/><rect class="b" x="15" y="2" width="8" height="5"/><rect class="b" x="15" y="10" width="8" height="5"/><rect class="b" x="15" y="18" width="8" height="5"/><path class="d" d="M9 12h6M12 4v17M12 4h3M12 21h3"/></svg>
        <svg class="vi" viewBox="0 0 24 24"><path fill="#fff" stroke="#1f70b8" stroke-width="1.500" d="M1 2h22v16H10l-4 5v-5H1z"/></svg>
        <svg class="vi" viewBox="0 0 24 24"><path class="w" d="M3 1h13l6 6v16H3z"/><path class="d" d="M16 1v6h6"/><circle cx="3" cy="9" r="2.500" fill="#6cb0e8" stroke="#1f70b8"/><path d="M9 9h9M9 13h9" stroke="#6cb0e8" stroke-width="1.500"/></svg>
        <svg class="vi" viewBox="0 0 24 24"><path class="w" d="M2 1h13l7 7v15H2z"/><path class="d" d="M15 1v7h7"/><path fill="#3b3a39" d="M6 15h3v6H6zM11 18h3v3h-3zM16 12h3v9h-3z"/></svg>
        <svg class="vi" viewBox="0 0 24 24"><path fill="#fff" stroke="#1f70b8" stroke-width="1.800" d="M3 2h19v20H3z"/><path fill="#6cb0e8" d="M10 22l3-8 6-4v-5h3v9l-6 8z"/><path fill="#ca5010" d="M1 1h7v6l-3.500 7L1 7zM16 15a3 3 0 1 0 .1 0zM21 10a2 2 0 1 0 .1 0z"/></svg>
        <svg class="vi" viewBox="0 0 24 24"><path fill="none" stroke="#9c3fa8" stroke-width="1.300" d="M12 1l11 11-11 11L1 12zM7 6l10 10M17 6L7 16M12 1l5 5-5 6-5-6zM12 12l5 5-5 6-5-6z"/></svg>

        <svg class="vi" viewBox="0 0 24 24"><path fill="#fff" stroke="#1f8ce0" stroke-width="1.300" d="M1 2h14l8 10-8 10H1l8-10zM6 2l8 10-8 10M12 2l8 10-8 10"/></svg>
        <span class="vmore">...</span>
      </div>

      <div class="viz-sep2"></div>
      <div class="wells">
        <div class="wl wl-a">Legenda</div>
        <div class="well well-f"><div class="pill"><span>Gênero</span><svg width="14" height="14"><use href="#cv"/></svg><svg width="14" height="14"><use href="#xx"/></svg></div></div>
        <div class="wl wl-b">Valores</div>
        <div class="well well-f"><div class="pill"><span>Faturamento Total</span><svg width="14" height="14"><use href="#cv"/></svg><svg width="14" height="14"><use href="#xx"/></svg></div></div>
        <div class="wl wl-c">Detalhes</div>
        <div class="well well-e">Adicionar os campos de da...</div>
        <div class="wl wl-d">Dicas de ferramentas</div>
        <div class="well well-e">Adicionar os campos de da...</div>
        <div class="wl wl-e drill">Drill-through</div>
        <div class="cross"><span>Relatório cruzado</span><i class="toggle"></i></div>
      </div>
      <i class="vscroll"></i>
    </aside>

    <aside class="fields">
      <div class="viz-head fld-head"><span class="pane-title">Campos</span><svg width="18" height="18"><use href="#dbl"/></svg></div>
      <div class="search2"><svg width="18" height="18"><use href="#mag"/></svg><span>Pesquisar</span></div>
      <div class="tree">
        <div class="tr tb"><svg class="chev" width="14" height="14"><use href="#cv"/></svg><span class="tbi"><svg width="18" height="18"><use href="#tbl"/></svg><svg class="badge" width="12" height="12"><use href="#chk"/></svg></span><span>Clientes</span></div>
        <div class="tr fd"><i class="cb"></i><i class="ic"></i><span>Bairro</span></div>
        <div class="tr fd"><i class="cb"></i><i class="ic"></i><span>Estado civil</span></div>
        <div class="tr fd"><i class="cb cb-on"><svg width="12" height="12" viewBox="0 0 12 12"><path d="M2 6l3 3 5-7" fill="none" stroke="#605e5c"/></svg></i><i class="ic"></i><span>Gênero</span></div>
        <div class="tr fd"><i class="cb"></i><i class="ic"></i><span>ID Consumidor</span></div>
        <div class="tr fd"><i class="cb"></i><i class="ic"></i><span>Pets</span></div>
        <div class="tr tb"><svg class="chev" width="14" height="14"><use href="#cr"/></svg><span class="tbi"><svg width="18" height="18"><use href="#tbl"/></svg></span><span>Produtos</span></div>
        <div class="tr tb"><svg class="chev" width="14" height="14"><use href="#cv"/></svg><span class="tbi"><svg width="18" height="18"><use href="#tbl"/></svg><svg class="badge" width="12" height="12"><use href="#chk"/></svg></span><span>VENDAS</span></div>
        <div class="tr fd"><svg class="chev2" width="14" height="14"><use href="#cr"/></svg><i class="cb"></i><svg class="ic" width="18" height="18"><use href="#cal"/></svg><span>Data de compra</span></div>
        <div class="tr fd"><i class="cb"></i><svg class="ic" width="18" height="18"><use href="#tsig"/></svg><span>Faturamento</span></div>
        <div class="tr fd"><i class="cb cb-on"><svg width="12" height="12" viewBox="0 0 12 12"><path d="M2 6l3 3 5-7" fill="none" stroke="#605e5c"/></svg></i><svg class="ic" width="18" height="18"><use href="#calc"/></svg><span>Faturamento Total</span></div>
        <div class="tr fd"><i class="cb"></i><svg class="ic" width="18" height="18"><use href="#sig"/></svg><span>ID Consumidor</span></div>
        <div class="tr fd"><i class="cb"></i><i class="ic"></i><span>ID Produto</span></div>
        <div class="tr fd"><i class="cb"></i><svg class="ic" width="18" height="18"><use href="#sig"/></svg><span>Quantidade</span></div>
        <div class="tr fd"><i class="cb"></i><svg class="ic" width="18" height="18"><use href="#sig"/></svg><span>Transacao</span></div>
        <div class="tr fd"><i class="cb"></i><svg class="ic" width="18" height="18"><use href="#tsig"/></svg><span>Valor Produto</span></div>
      </div>
    </aside>
  </main>

  <footer class="status"><span>Página 1 de 1</span><span>Atualização disponível (clique para baixar)</span></footer>

  <div class="taskbar">
    <div class="weather">
      <i class="sun"></i>
      <div class="wtxt"><div>21°C</div><div class="sunny">Sunny</div></div>
    </div>
    <div class="apps">
      <div class="app-i"><svg viewBox="0 0 30 30"><path fill="#4fc3f7" d="M0 0h14v14H0z"/><path fill="#29a8ea" d="M16 0h14v14H16z"/><path fill="#1a8fdc" d="M0 16h14v14H0z"/><path fill="#0f7ad0" d="M16 16h14v14H16z"/></svg></div>
      <div class="app-i"><svg viewBox="0 0 30 30"><circle cx="17" cy="12" r="9.500" fill="none" stroke="#1b1a19" stroke-width="2.800"/><path d="M11 20l-7 8" stroke="#1b1a19" stroke-width="4" stroke-linecap="round"/></svg></div>
      <div class="app-i"><svg viewBox="0 0 30 30"><rect x="1" y="11" width="22" height="18" rx="1.500" fill="#2b2a29"/><rect x="9" y="1" width="20" height="18" rx="1.500" fill="#e9e8e7"/><rect x="9" y="11" width="14" height="8" fill="#a8a7a6"/></svg></div>
      <div class="app-i"><svg viewBox="0 0 30 30"><path fill="#6264a7" d="M15 1a14 14 0 0 1 0 28H8v-4A14 14 0 0 1 15 1z"/><path fill="#fff" d="M8 10h9a2 2 0 0 1 2 2v7a1 1 0 0 1-1 1H9a2 2 0 0 1-2-2v-7a1 1 0 0 1 1-1zM20 14l4-3v8l-4-3z"/></svg></div>
      <div class="app-i dotted"><svg viewBox="0 0 30 30"><path fill="#ea4335" d="M15 1a14 14 0 0 1 12.100 7H15a7 7 0 0 0-6.500 4.500L3.500 6.500A14 14 0 0 1 15 1z"/><path fill="#34a853" d="M3.500 6.500l6 10.500a7 7 0 0 0 7 5l-3.500 6.900A14 14 0 0 1 3.500 6.500z"/><path fill="#fbbc04" d="M27.100 8A14 14 0 0 1 13 28.900L19.500 18a7 7 0 0 0 0-10z"/><circle cx="15" cy="15" r="6.500" fill="#fff"/><circle cx="15" cy="15" r="5" fill="#1a73e8"/></svg></div>
      <div class="app-i"><svg viewBox="0 0 30 30"><path fill="#0f6cbd" d="M15 0l15 11v4H0v-4z"/><path fill="#fff" d="M7 10h16v5l-8 6-8-6z"/><path fill="#2aa7ea" d="M0 11l15 12L30 11v19H0z"/><path fill="#55c9f5" d="M0 30l15-7 15 7z"/></svg></div>
      <div class="app-i"><svg viewBox="0 0 30 30"><path fill="none" stroke="#2b88d8" stroke-width="2" d="M9 7V3a2 2 0 0 1 2-2h8a2 2 0 0 1 2 2v4"/><rect x="3" y="6" width="24" height="24" rx="3" fill="#134a8e"/><path fill="#f25022" d="M9 11h5.500v5.500H9z"/><path fill="#7fba00" d="M15.500 11H21v5.500h-5.500z"/><path fill="#00a4ef" d="M9 17.500h5.500V23H9z"/><path fill="#ffb900" d="M15.500 17.500H21V23h-5.500z"/></svg></div>
      <div class="app-i"><svg viewBox="0 0 30 30"><path fill="#d9a00f" d="M1 2h11l3 3h14v6H1z"/><path fill="#fbdb6c" d="M1 7h28v21H1z"/><path fill="#0f7ad0" d="M9 20h12v8H9z"/><path fill="#fff" d="M11 22h8v1.500h-8z"/></svg></div>
      <div class="app-i"><svg viewBox="0 0 30 30"><circle cx="15" cy="15" r="9.500" fill="none" stroke="#39b7f4" stroke-width="3"/></svg></div>
      <div class="app-i"><svg viewBox="0 0 30 30"><circle cx="15" cy="15" r="14.500" fill="#1b9de2"/><path fill="#35c1a4" d="M2 11C5 2 18-2 25 5c4 4 4 10 1 12-3 1-5-4-10-5C10 11 6 13 2 18z"/><path fill="#0c59a4" d="M6 16c1 8 8 12 14 12 3 0 5-1 7-3-6 2-13 1-14-5-1-4 2-7 3-8-5-1-9 1-10 4z"/></svg></div>
      <div class="app-i"><svg viewBox="0 0 30 30"><circle cx="15" cy="17" r="13" fill="#ff7139"/><path fill="#ffcb00" d="M18 0c1 5 7 7 9 13l-8-2-3-4z"/><path fill="#e31587" d="M4 13c-1 7 2 13 8 15l6-3-9-9z"/><circle cx="16" cy="17" r="6.500" fill="#7542e5"/><path fill="#ffa436" d="M4 8l4 7 8-4c-3-3-8-4-10-1z"/></svg></div>
      <div class="app-i"><svg viewBox="0 0 30 30"><path fill="#111" d="M9 1l6 5-6 5-6-5zM21 1l6 5-6 5-6-5zM3 16l6-5 6 5-6 5zM27 16l-6-5-6 5 6 5zM15 20l6 5-6 5-6-5z"/></svg></div>
      <div class="app-i"><svg viewBox="0 0 30 30"><rect x="1" y="0" width="28" height="30" rx="3" fill="#af1005"/><path fill="none" stroke="#fff" stroke-width="1.800" d="M6 23c4-1 7-9 8-14 .5-3 1-5 0-5-2 0-1 6 3 11 2 2 6 4 7 2s-4-2-7-1c-3 .5-8 2-10 5-1 1-1 2-1 2z"/></svg></div>
      <div class="app-i"><svg viewBox="0 0 30 30"><rect x="0" y="0" width="30" height="30" rx="2" fill="#4a4a4a"/><path fill="#ff9800" d="M21 6v5l-8 3 8 3v4l-12 5v-5l7-3-7-3v-4z"/></svg></div>
      <div class="app-i pbi"><svg viewBox="0 0 30 30"><path fill="#f2c811" d="M3 18h9v12H3z"/><path fill="#e0a710" d="M12 10h9v20h-9z"/><path fill="#c98f0c" d="M18 0h8v30h-8z"/></svg></div>
      <div class="app-i dotted"><svg viewBox="0 0 30 30"><circle cx="15" cy="15" r="14.500" fill="#1ed760"/><path fill="none" stroke="#111" stroke-width="2.800" stroke-linecap="round" d="M7 10c6-2 12-1 17 2M8 15c5-1 10-1 14 2M9 20c4-1 8-1 11 1"/></svg></div>
    </div>
    <div class="tray">
      <svg class="t1" width="16" height="14" viewBox="0 0 16 14"><path d="M1 11l7-8 7 8" fill="none" stroke="#252423" stroke-width="1.300"/></svg>
      <svg class="t2" width="22" height="24" viewBox="0 0 22 24"><path d="M4 17a6 6 0 0 1 1-11 6 6 0 0 1 11 2l-2 9z" fill="#8a8886"/><path d="M4 12a5 5 0 0 1 8-5" fill="none" stroke="#fff"/><circle cx="15" cy="16" r="6" fill="#d32f2f"/><path d="M13 14l4 4M17 14l-4 4" stroke="#fff" stroke-width="1.300"/></svg>
      <svg class="t3" width="20" height="18" viewBox="0 0 20 18"><path d="M2 7c5-5 11-5 16 0" fill="none" stroke="#a19f9d" stroke-width="1.300"/><path d="M5 10c3-3 7-3 10 0M8 13c1-1 3-1 4 0" fill="none" stroke="#252423" stroke-width="1.300"/><circle cx="10" cy="15.500" r="1.300" fill="#252423"/></svg>
      <svg class="t4" width="22" height="20" viewBox="0 0 22 20"><path d="M2 7h3l6-5v16l-6-5H2z" fill="none" stroke="#252423" stroke-width="1.200"/><path d="M14 6c1.500 2 1.500 6 0 8" fill="none" stroke="#252423" stroke-width="1.200"/><path d="M17 3c3 4 3 10 0 14" fill="none" stroke="#a19f9d" stroke-width="1.200"/></svg>
      <svg width="22" height="18" viewBox="0 0 22 18"><rect x="1" y="2" width="17" height="14" rx="3" fill="none" stroke="#252423" stroke-width="1.400"/><rect x="4" y="5" width="10" height="8" fill="#252423"/><path d="M19 7h2v4h-2z" fill="#252423"/></svg>
      <div class="clock"><div>08:01</div><div>28/09/2022</div></div>
    </div>
  </div>
</div>
</body>
</html>
```

FILE: styles.css
```css
* { box-sizing: border-box; }
html, body { margin: 0; padding: 0; }
body { font-family: Roboto, "Open Sans", "Liberation Sans", sans-serif; font-size: 14px; letter-spacing: .32px; color: #252423; background: #f3f2f1; }
svg text { letter-spacing: 0; }
i { font-style: normal; display: block; }
.sprite { width: 0; height: 0; position: absolute; }
.app { width: 1920px; height: 1080px; display: flex; flex-direction: column; overflow: hidden; }

/* title bar */
.titlebar { height: 43px; background: #3b3a39; color: #fff; display: flex; align-items: center; position: relative; flex: none; }
.qa { display: flex; gap: 18px; padding-left: 21px; align-items: center; }
.doc-title { position: absolute; left: 0; right: 144px; top: 0; text-align: center; line-height: 43px; font-size: 14px; }
.win { margin-left: auto; display: flex; align-items: center; }
.enter { font-size: 14px; margin-right: 14px; letter-spacing: .1px; }
.avatar { width: 20px; height: 20px; border-radius: 50%; background: #f3f2f1; margin-right: 19px; }
.wbtn { display: block; }

/* tabs */
.tabs { height: 38px; flex: none; background: #f3f2f1; display: flex; }
.tab { padding: 0 20px; font-size: 17px; letter-spacing: .15px; line-height: 39px; height: 38px; color: #3b3a39; }
.tab-first { padding: 0 28px 0 29px; }
.tab-on { color: #252423; font-weight: 500; padding: 0; margin: 0 19px 0 20px; border-bottom: 3px solid #f2c811; letter-spacing: .2px; }
.tab-aj { padding-left: 18px; }
.tab-ctx { background: #fff; color: #6b5a1e; font-weight: 500; margin-left: -1px; }
.tab-ctx2 { margin-left: 5px; }

/* ribbon */
.ribbon { height: 119px; flex: none; background: #f3f2f1; display: flex; position: relative; z-index: 3; box-shadow: 0 2px 4px rgba(0,0,0,.14); padding-top: 7px; }
.group { display: flex; flex-direction: column; height: 110px; border-right: 1px solid #d2d0ce; }
.group-body { display: flex; height: 96px; padding-left: 10px; }
.group-name { font-size: 12px; line-height: 16px; text-align: center; color: #3b3a39; letter-spacing: .08px; }
.g-clip { width: 244px; }
.g-clip .group-body { padding-left: 14px; }
.g-data { width: 671px; }
.g-query { width: 167px; }
.g-insert { width: 196px; }
.g-calc { width: 131px; }
.g-conf { width: 145px; }
.g-share { width: 92px; }
.rb { display: flex; flex-direction: column; align-items: center; text-align: center; font-size: 14px; line-height: 20px; color: #3b3a39; white-space: nowrap; flex: none; }
.rb.off { color: #a19f9d; }
.ri { width: 40px; height: 40px; display: block; margin: 3px 0 3px; flex: none; overflow: visible; }
.w42 { width: 42px; } .w50 { width: 50px; } .w54 { width: 54px; } .w56 { width: 56px; } .w58 { width: 58px; }
.w60 { width: 60px; } .w62 { width: 62px; } .w70 { width: 70px; } .w72 { width: 72px; } .w84 { width: 84px; }
.w122 { width: 122px; } .w144 { width: 144px; } .w202 { width: 202px; }
.car { display: inline-block; width: 5px; height: 5px; border: solid #3b3a39; border-width: 0 1.500px 1.500px 0; transform: rotate(45deg); margin: 0 2px 3px 5px; }
.car-off { border-color: #a19f9d; }
.small-list { margin-left: 10px; display: flex; flex-direction: column; padding-top: 0; }
.sb { display: flex; align-items: center; height: 30px; gap: 4px; color: #3b3a39; white-space: nowrap; }
.sb svg { flex: none; width: 20px; }
.collapse { position: absolute; right: 6px; top: 105px; }
.xl { fill: #fff; font-size: 15px; font-weight: 700; text-anchor: middle; }
.aa { fill: #2b88d8; font-size: 27px; font-weight: 300; text-anchor: middle; }

/* main */
.main { flex: 1; display: flex; min-height: 0; }
.rail { width: 51px; flex: none; background: #f3f2f1; border-right: 1px solid #e1dfdd; }
.rail-item { height: 50px; display: flex; align-items: center; justify-content: center; padding: 0 0 2px 2px; }
.rail-on { border: 1px dotted #252423; border-left: 3px solid #f2c811; padding: 0; }
.center { width: 1418px; flex: none; display: flex; flex-direction: column; }
.workspace { height: 746px; display: flex; flex: none; }
.canvas { width: 1165px; flex: none; background: #fff; padding: 48px 0 0 6px; border-right: 1px solid #a19f9d; }
.page { width: 1154px; height: 651px; border: 2px dotted #605e5c; position: relative;
  background-image:
    radial-gradient(circle at 1px 1px, #605e5c .6px, transparent .95px),
    radial-gradient(circle at 1px 1px, #605e5c .6px, transparent .95px);
  background-size: 14.38px 86.3px, 86.3px 14.38px;
  background-position: -1px 0, -1px 0; }
.cards { position: absolute; left: 15px; top: 2px; width: 676px; height: 169px; background: #fff; display: flex; letter-spacing: 0; }
.card { text-align: center; flex: none; }
.c1 { width: 230px; padding-top: 29px; }
.c2 { width: 200px; padding-top: 56px; }
.c3 { width: 230px; margin-left: 16px; padding-top: 56px; }
.big { font-size: 48px; line-height: 54px; color: #252423; }
.shift { margin-right: 13px; }
.cap { font-size: 14px; color: #605e5c; line-height: 20px; margin-top: 0; letter-spacing: .06px; }
.vis-tools { position: absolute; left: 993px; top: 165px; padding: 0 0 0 4px; background: #fff; display: flex; gap: 15px; align-items: center; height: 20px; }
.dots { font-size: 20px; line-height: 6px; letter-spacing: 1.500px; font-weight: 700; color: #8a8886; height: 18px; }
.chart { position: absolute; left: 15px; top: 187px; width: 1076px; height: 431px; background: #fff; border: solid #c8c6c4; border-width: 0 1px; }
.chart::before, .chart::after { content: ""; position: absolute; left: 0; right: 0; height: 2px; background: #e1dfdd; }
.chart::before { top: 0; }
.chart::after { bottom: 0; }
.chart-title { position: absolute; left: 4px; top: 1px; font-size: 14.500px; letter-spacing: .32px; line-height: 20px; color: #252423; z-index: 1; }
.chart-svg { position: absolute; left: -1px; top: 0; }
.lbl { font-size: 10.700px; fill: #605e5c; }
.leg-t { font-size: 11px; font-weight: 500; fill: #3b3a39; }
.leg { font-size: 11.600px; fill: #605e5c; }
.hd { position: absolute; background: #a6a6a6; }
.hd-tl { left: -1px; top: -3px; width: 13px; height: 5px; }
.hd-tl::after, .hd-bl::after, .hd-tr::after, .hd-br::after { content: ""; position: absolute; width: 5px; height: 13px; background: #a6a6a6; }
.hd-tl::after { left: 0; top: 0; }
.hd-tr { right: -2px; top: -3px; width: 13px; height: 5px; }
.hd-tr::after { right: 0; top: 0; }
.hd-bl { left: -1px; bottom: -2px; width: 13px; height: 5px; }
.hd-bl::after { left: 0; bottom: 0; }
.hd-br { right: -2px; bottom: -2px; width: 13px; height: 5px; }
.hd-br::after { right: 0; bottom: 0; }
.hd-tm { left: 530px; top: -2px; width: 15px; height: 6px; }
.hd-bm { left: 530px; bottom: -2px; width: 15px; height: 6px; }
.hd-ml { left: -3px; top: 209px; width: 5px; height: 15px; }
.hd-mr { right: -3px; top: 209px; width: 5px; height: 15px; }

/* filter pane */
.filters { width: 252px; flex: none; background: #fff; padding: 0 0 0 1px; }
.pane-head { height: 50px; display: flex; align-items: center; padding-left: 14px; }
.pane-title { font-size: 20px; font-weight: 500; color: #252423; letter-spacing: 0; }
.pt-viz { letter-spacing: -.3px; }
.pane-head .pane-title { margin-left: 10px; }
.eye { margin-left: auto; margin-right: 19px; margin-top: -8px; }
.dblb { margin-right: 12px; margin-top: -6px; }
.fsearch { margin: 7px 15px 0 11px; height: 39px; border: 1px solid #c8c6c4; border-radius: 2px; display: flex; align-items: center; padding-left: 12px; gap: 14px; font-size: 15px; color: #3b3a39; }
.fdiv { height: 1px; background: #a19f9d; margin-top: 5px; }
.fsec { display: flex; justify-content: space-between; margin: 21px 14px 0 11px; height: 20px; line-height: 20px; color: #3b3a39; }
.fsec-gap { margin-top: 35px; }
.fsec b { font-weight: 400; letter-spacing: 1px; line-height: 18px; }
.fcard { margin: 9px 10px 0 11px; height: 56px; border: 1px solid #c8c6c4; border-radius: 2px; padding: 5px 10px; line-height: 23px; color: #252423; background: #fff; }
.fcard-first { margin-top: 11px; }
.fadd { padding: 0 0 0 17px; line-height: 56px; white-space: nowrap; }

/* visualizations */
.viz { width: 226px; flex: none; background: #f3f2f1; border-left: 1px solid #e1dfdd; position: relative; }
.viz-head { height: 48px; display: flex; align-items: center; justify-content: space-between; padding: 2px 10px 0 9px; }
.criar { height: 20px; line-height: 20px; padding-left: 9px; font-weight: 500; color: #3b3a39; font-size: 14px; letter-spacing: .1px; }
.viz-tabs { display: flex; margin: 4px 0 0 9px; height: 40px; }
.vt { width: 40px; height: 40px; display: flex; align-items: center; justify-content: center; margin-right: 42px; flex: none; }
.vt-on { background: #d2d0ce; border-radius: 2px; }
.vt-fmt svg { margin-left: 4px; }
.viz-sep { height: 1px; background: #a19f9d; margin-top: 15px; position: relative; }
.notch { position: absolute; left: 20px; top: -10px; }
.vgrid { display: grid; grid-template-columns: repeat(6, 35px); grid-auto-rows: 35px; margin: 10px 0 0 6px; place-items: center; }
.vi { width: 24px; height: 24px; display: block; stroke-width: 1.300; }
.vi-on { width: 30px; height: 30px; background: #d2d0ce; border: 1px solid #8a8886; display: flex; align-items: center; justify-content: center; }
.d { fill: none; stroke: #3b3a39; }
.b { fill: #6cb0e8; stroke: #1f70b8; }
.bl { fill: none; stroke: #1f70b8; }
.g { fill: #c8c6c4; stroke: #8a8886; }
.w { fill: #fff; stroke: #3b3a39; }
.vt123 { font-size: 11px; fill: #2b88d8; text-anchor: middle; stroke: none; }
.vr { font-size: 22px; font-weight: 700; fill: #1f70b8; text-anchor: middle; stroke: none; }
.vp { font-size: 21px; font-weight: 700; fill: #1f70b8; text-anchor: middle; stroke: none; }
.vmore { font-size: 18px; line-height: 14px; letter-spacing: 1.500px; color: #3b3a39; font-weight: 700; }
.viz-sep2 { height: 1px; background: #e1dfdd; margin-top: 9px; }
.wells { padding-left: 5px; }
.wl { height: 20px; line-height: 20px; margin-left: 9px; color: #3b3a39; }
.wl-a { margin-top: 10px; }
.wl-b { margin-top: 13px; }
.wl-c { margin-top: 14px; }
.wl-d { margin-top: 15px; }
.wl-e { margin-top: 15px; }
.drill { font-weight: 500; color: #605e5c; }
.well { width: 210px; border: 1px dashed #c8c6c4; background: #fff; margin-top: 7px; border-radius: 2px; }
.well-f { height: 46px; padding: 4px 2px; }
.well-e { height: 34px; line-height: 35px; padding-left: 12px; color: #252423; margin-top: 6px; white-space: nowrap; overflow: hidden; }
.pill { height: 29px; width: 205px; background: #e6e6e6; border: 1px solid #c8c6c4; border-radius: 2px; display: flex; align-items: center; padding: 0 4px 0 5px; gap: 6px; color: #252423; }
.pill span { margin-right: auto; }
.cross { display: flex; justify-content: space-between; align-items: center; margin: 11px 8px 0 9px; height: 20px; width: 202px; color: #3b3a39; }
.toggle { width: 40px; height: 20px; border: 1px solid #8a8886; border-radius: 10px; background: #fff; position: relative; }
.toggle::after { content: ""; position: absolute; left: 7px; top: 4px; width: 10px; height: 10px; border-radius: 50%; background: #605e5c; }
.vscroll { position: absolute; left: 217px; top: 395px; width: 8px; height: 335px; background: #d2d0ce; border-radius: 4px; }

/* fields */
.fields { flex: 1; background: #f3f2f1; border-left: 1px solid #e1dfdd; }
.fld-head { height: 50px; padding: 0 9px 0 9px; }
.search2 { margin: 7px 4px 0 4px; height: 32px; border: 1px solid #8a8886; border-radius: 2px; background: #fff; display: flex; align-items: center; gap: 9px; padding: 3px 0 0 8px; font-size: 15px; color: #3b3a39; }
.tree { margin-top: 13px; }
.tr { height: 30px; display: flex; align-items: center; color: #3b3a39; white-space: nowrap; }
.tb { padding-left: 8px; }
.chev { flex: none; margin-right: 4px; }
.tbi { position: relative; width: 18px; height: 18px; margin-right: 6px; flex: none; }
.tbi svg { display: block; }
.badge { position: absolute; left: 9px; top: 9px; }
.fd { padding-left: 47px; position: relative; }
.chev2 { position: absolute; left: 27px; top: 8px; }
.cb { width: 14px; height: 15px; border: 1px solid #8a8886; border-radius: 2px; background: #f3f2f1; flex: none; margin-right: 10px; }
.cb-on { background: #f2c811; border-color: #f2c811; }
.cb svg { display: block; margin: 1px 0 0 0; }
.ic { width: 18px; height: 18px; flex: none; margin-right: 5px; display: block; }

/* page tabs */
.pagebar { height: 44px; flex: none; background: #f3f2f1; display: flex; align-items: flex-start; padding-left: 5px; }
.pnav { margin-top: 16px; flex: none; }
.pnav2 { margin-left: 17px; }
.ptab { margin-left: 7px; width: 108px; height: 44px; background: #fff; border-left: 1px solid #a19f9d; border-right: 1px solid #a19f9d; border-bottom: 5px solid #f2c811; text-align: center; line-height: 42px; color: #252423; }
.padd { width: 49px; height: 40px; margin-top: 2px; background: #f2c811; display: flex; align-items: center; justify-content: center; }

/* status + taskbar */
.status { height: 30px; flex: none; background: #f3f2f1; border-top: 1px solid #e1dfdd; display: flex; justify-content: space-between; align-items: center; padding: 0 6px 0 7px; color: #3b3a39; }
.taskbar { height: 60px; flex: none; background: #f3f3f3; display: flex; position: relative; }
.taskbar::before { content: ""; position: absolute; left: 0; top: 0; width: 1650px; height: 1px; background: #e1dfdd; }
.weather { width: 520px; flex: none; display: flex; align-items: center; padding-left: 29px; gap: 11px; }
.sun { width: 25px; height: 25px; border-radius: 50%; background: linear-gradient(#ffc400, #e8710a); }
.wtxt { line-height: 20px; font-size: 14px; color: #252423; }
.sunny { color: #605e5c; }
.apps { display: flex; flex: none; }
.app-i { width: 55px; height: 60px; display: flex; align-items: center; justify-content: center; position: relative; }
.app-i svg { width: 30px; height: 30px; display: block; }
.dotted::after { content: ""; position: absolute; left: 25px; bottom: 2px; width: 5px; height: 5px; border-radius: 50%; background: #8a8886; }
.pbi { background: #fbfbfb; border-radius: 4px; margin: 6px 3px; width: 49px; height: 48px; }
.pbi::after { content: ""; position: absolute; left: 14px; bottom: 0; width: 20px; height: 3px; border-radius: 2px; background: #0f6cbd; }
.tray { flex: 1; display: flex; align-items: center; padding-left: 256px; white-space: nowrap; }
.tray svg { flex: none; }
.t1 { margin-right: 12px; }
.t2 { margin-right: 14px; }
.t3 { margin-right: 6px; }
.t4 { margin-right: 11px; }
.clock { margin-left: auto; padding-right: 23px; text-align: right; line-height: 20px; font-size: 14px; color: #252423; letter-spacing: .1px; }
```
